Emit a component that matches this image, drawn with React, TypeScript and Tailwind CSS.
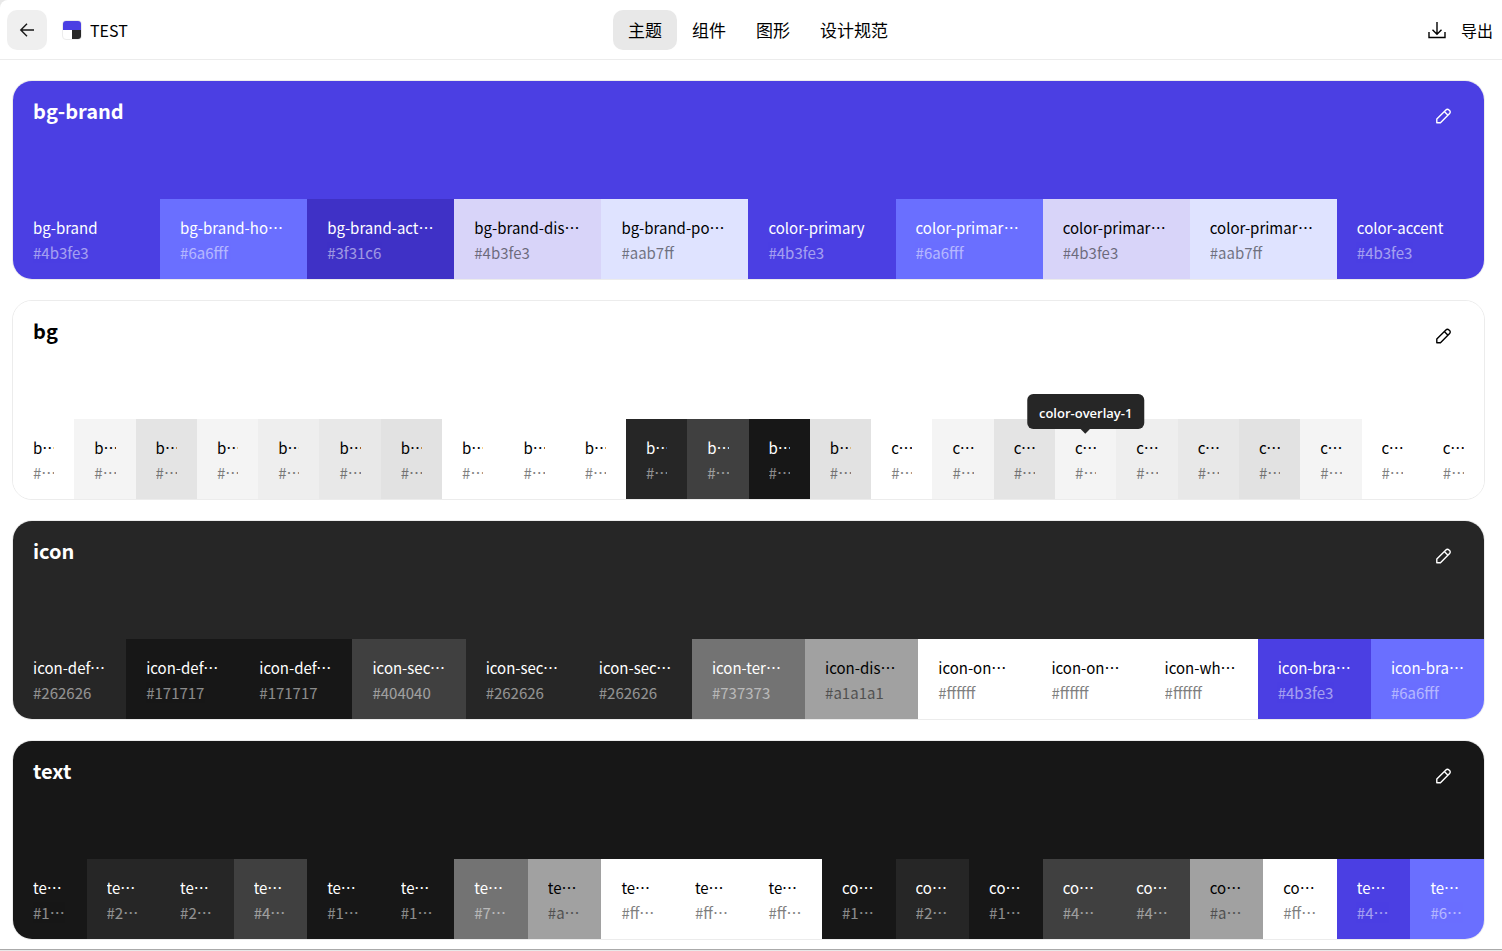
import { clsx } from 'clsx';

interface Swatch {
  name: string;
  hex: string;
  // fill differs from hex when the token carries an alpha channel
  fill?: string;
  dark?: boolean;
  tooltip?: boolean;
}

interface Palette {
  title: string;
  fill: string;
  dark: boolean;
  swatches: Swatch[];
}

const TABS = ['主题', '组件', '图形', '设计规范'];

const PALETTES: Palette[] = [
  {
    title: 'bg-brand',
    fill: '#4b3fe3',
    dark: true,
    swatches: [
      { name: 'bg-brand', hex: '#4b3fe3', dark: true },
      { name: 'bg-brand-hover', hex: '#6a6fff', dark: true },
      { name: 'bg-brand-active', hex: '#3f31c6', dark: true },
      { name: 'bg-brand-disabled', hex: '#4b3fe3', fill: '#d8d4f9' },
      { name: 'bg-brand-popover', hex: '#aab7ff', fill: '#dfe3ff' },
      { name: 'color-primary', hex: '#4b3fe3', dark: true },
      { name: 'color-primary-hover', hex: '#6a6fff', dark: true },
      { name: 'color-primary-disabled', hex: '#4b3fe3', fill: '#d8d4f9' },
      { name: 'color-primary-popover', hex: '#aab7ff', fill: '#dfe3ff' },
      { name: 'color-accent', hex: '#4b3fe3', dark: true },
    ],
  },
  {
    title: 'bg',
    fill: '#ffffff',
    dark: false,
    swatches: [
      { name: 'bg-default', hex: '#ffffff' },
      { name: 'bg-secondary', hex: '#f4f4f4' },
      { name: 'bg-tertiary', hex: '#e4e4e4' },
      { name: 'bg-overlay-1', hex: '#f4f4f4' },
      { name: 'bg-overlay-2', hex: '#eeeeee' },
      { name: 'bg-overlay-3', hex: '#e8e8e8' },
      { name: 'bg-overlay-4', hex: '#e2e2e2' },
      { name: 'bg-popover', hex: '#ffffff' },
      { name: 'bg-card', hex: '#ffffff' },
      { name: 'bg-white', hex: '#ffffff' },
      { name: 'bg-inverse', hex: '#262626', dark: true },
      { name: 'bg-inverse-hover', hex: '#404040', dark: true },
      { name: 'bg-inverse-active', hex: '#171717', dark: true },
      { name: 'bg-disabled', hex: '#e2e2e2' },
      { name: 'color-background', hex: '#ffffff' },
      { name: 'color-secondary', hex: '#f4f4f4' },
      { name: 'color-muted', hex: '#e4e4e4' },
      { name: 'color-overlay-1', hex: '#f4f4f4', tooltip: true },
      { name: 'color-overlay-2', hex: '#eeeeee' },
      { name: 'color-overlay-3', hex: '#e8e8e8' },
      { name: 'color-overlay-4', hex: '#e2e2e2' },
      { name: 'color-input', hex: '#f4f4f4' },
      { name: 'color-popover', hex: '#ffffff' },
      { name: 'color-card', hex: '#ffffff' },
    ],
  },
  {
    title: 'icon',
    fill: '#262626',
    dark: true,
    swatches: [
      { name: 'icon-default', hex: '#262626', dark: true },
      { name: 'icon-default-hover', hex: '#171717', dark: true },
      { name: 'icon-default-active', hex: '#171717', dark: true },
      { name: 'icon-secondary', hex: '#404040', dark: true },
      { name: 'icon-secondary-hover', hex: '#262626', dark: true },
      { name: 'icon-secondary-active', hex: '#262626', dark: true },
      { name: 'icon-tertiary', hex: '#737373', dark: true },
      { name: 'icon-disabled', hex: '#a1a1a1' },
      { name: 'icon-onbrand', hex: '#ffffff' },
      { name: 'icon-onbrand-hover', hex: '#ffffff' },
      { name: 'icon-white', hex: '#ffffff' },
      { name: 'icon-brand', hex: '#4b3fe3', dark: true },
      { name: 'icon-brand-hover', hex: '#6a6fff', dark: true },
    ],
  },
  {
    title: 'text',
    fill: '#171717',
    dark: true,
    swatches: [
      { name: 'text-default', hex: '#171717', dark: true },
      { name: 'text-default-hover', hex: '#262626', dark: true },
      { name: 'text-default-active', hex: '#262626', dark: true },
      { name: 'text-secondary', hex: '#404040', dark: true },
      { name: 'text-secondary-hover', hex: '#171717', dark: true },
      { name: 'text-secondary-active', hex: '#171717', dark: true },
      { name: 'text-tertiary', hex: '#737373', dark: true },
      { name: 'text-disabled', hex: '#a1a1a1' },
      { name: 'text-onbrand', hex: '#ffffff' },
      { name: 'text-onbrand-hover', hex: '#ffffff' },
      { name: 'text-white', hex: '#ffffff' },
      { name: 'color-foreground', hex: '#171717', dark: true },
      { name: 'color-card-foreground', hex: '#262626', dark: true },
      { name: 'color-popover-foreground', hex: '#171717', dark: true },
      { name: 'color-secondary-foreground', hex: '#404040', dark: true },
      { name: 'color-accent-foreground', hex: '#404040', dark: true },
      { name: 'color-muted-foreground', hex: '#a1a1a1' },
      { name: 'color-primary-foreground', hex: '#ffffff' },
      { name: 'text-brand', hex: '#4b3fe3', dark: true },
      { name: 'text-brand-hover', hex: '#6a6fff', dark: true },
    ],
  },
];

function BackIcon() {
  return (
    <svg className="size-4" viewBox="0 0 16 16" fill="none" stroke="currentColor" strokeWidth={1.4} aria-hidden="true">
      <path d="M15 8H1.8M8 1.8L1.8 8L8 14.2" />
    </svg>
  );
}

function DownloadIcon() {
  return (
    <svg className="size-5" viewBox="0 0 20 20" fill="none" stroke="currentColor" strokeWidth={1.4} aria-hidden="true">
      <path d="M10 2V14M5.5 9.7L10 14.2L14.5 9.7M2 12V17.5H18V12" />
    </svg>
  );
}

function PencilIcon() {
  return (
    <svg
      className="size-4"
      viewBox="0 0 16 16"
      fill="none"
      stroke="currentColor"
      strokeWidth={1.4}
      strokeLinejoin="round"
      aria-hidden="true"
    >
      <path d="M.8 14.7V11L9.9 1.9a2.1 2.1 0 0 1 3 0l.7.7a2.1 2.1 0 0 1 0 3L4.5 14.7z" />
      <path d="M8.3 3.5l3.7 3.7" />
    </svg>
  );
}

function Logo() {
  return (
    <span className="grid size-5 grid-cols-2 overflow-hidden rounded border border-[#ececec] bg-white">
      <span className="col-span-2 bg-[#4b3fe3]" />
      <span className="col-start-2 bg-[#262626]" />
    </span>
  );
}

function Tooltip({ label }: { label: string }) {
  return (
    <div
      role="tooltip"
      className="absolute -top-[25px] left-1/2 z-10 -translate-x-1/2 rounded-md bg-[#262626] px-3 pt-2.5 pb-1.5 font-['Open_Sans',sans-serif] text-[13px] leading-[19px] font-semibold whitespace-nowrap text-white"
    >
      {label}
      <span className="absolute -bottom-[3px] left-1/2 size-2 -translate-x-1/2 rotate-45 bg-[#262626]" />
    </div>
  );
}

function SwatchCell({ swatch }: { swatch: Swatch }) {
  return (
    <li
      className={clsx(
        'relative h-20 min-w-0 flex-1 px-5 pt-4 text-[15px] leading-[25px]',
        swatch.dark ? 'text-white' : 'text-black'
      )}
      style={{ backgroundColor: swatch.fill ?? swatch.hex }}
    >
      <p className="truncate">{swatch.name}</p>
      <p className="truncate opacity-50">{swatch.hex}</p>
      {swatch.tooltip && <Tooltip label={swatch.name} />}
    </li>
  );
}

function PaletteCard({ palette }: { palette: Palette }) {
  return (
    <section className="overflow-hidden rounded-[20px] border border-[#ececec]">
      <div
        className={clsx(
          'flex h-[118px] items-start justify-between pr-6 pl-5',
          palette.dark ? 'text-white' : 'text-black'
        )}
        style={{ backgroundColor: palette.fill }}
      >
        <h2 className="pt-3.5 text-xl leading-8 font-bold">{palette.title}</h2>
        <button type="button" aria-label={`编辑 ${palette.title}`} className="mt-[19px] grid size-8 place-items-center">
          <PencilIcon />
        </button>
      </div>
      <ul className="flex">
        {palette.swatches.map((swatch) => (
          <SwatchCell key={swatch.name} swatch={swatch} />
        ))}
      </ul>
    </section>
  );
}

export default function App() {
  return (
    <div lang="zh-CN" className="bg-[#e8e8e8] font-['Noto_Sans_CJK_SC',sans-serif] text-[#171717]">
      <div className="rounded-tl-lg border-b border-[#aaaaaa] bg-white">
        <header className="flex h-[60px] items-center border-b border-[#ececec] px-[7px]">
          <div className="flex flex-1 items-center">
            <button type="button" aria-label="返回" className="grid size-10 place-items-center rounded-[10px] bg-[#efefef]">
              <BackIcon />
            </button>
            <div className="ml-[15px] flex items-center gap-2">
              <Logo />
              <h1 className="text-base text-black">TEST</h1>
            </div>
          </div>
          <nav className="flex pl-3.5">
            {TABS.map((tab, i) => (
              <button
                key={tab}
                type="button"
                className={clsx(
                  'h-10 rounded-[10px] px-[15px] text-[17px] text-black',
                  i === 0 && 'bg-[#e8e8e8]'
                )}
              >
                {tab}
              </button>
            ))}
          </nav>
          <div className="flex flex-1 justify-end">
            <button type="button" className="flex h-10 items-center gap-3.5 pr-0.5 text-base text-black">
              <DownloadIcon />
              导出
            </button>
          </div>
        </header>
        <main className="flex flex-col gap-5 pt-5 pr-[17px] pb-[9px] pl-3">
          {PALETTES.map((palette) => (
            <PaletteCard key={palette.title} palette={palette} />
          ))}
        </main>
      </div>
      <div className="h-px" />
    </div>
  );
}
